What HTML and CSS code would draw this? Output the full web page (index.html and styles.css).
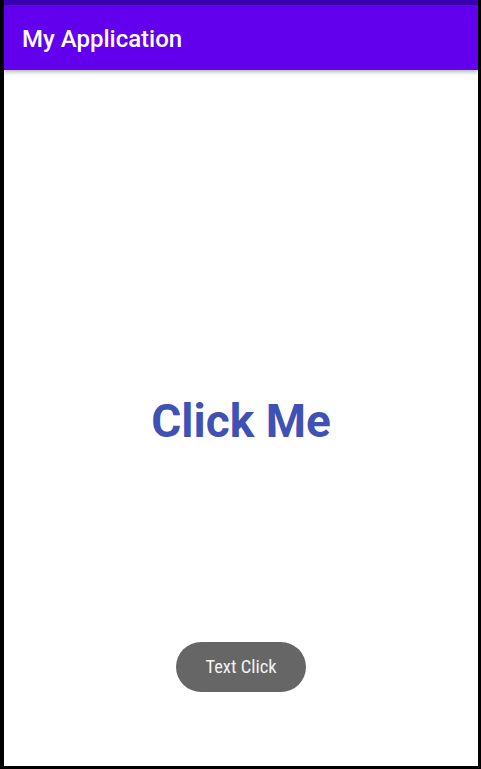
FILE: index.html
```html
<!DOCTYPE html>
<html>
<head>
    <meta charset="UTF-8">
    <title>My Application</title>
    <link rel="stylesheet" href="styles.css">
</head>
<body>
    <div class="device">
        <div class="status-bar"></div>
        <div class="app-bar">
            <span class="app-title">My Application</span>
        </div>
        <div class="content">
            <span class="click-text">Click Me</span>
            <div class="toast">Text Click</div>
        </div>
    </div>
</body>
</html>
```

FILE: styles.css
```css
* {
    box-sizing: border-box;
}

html, body {
    margin: 0;
    height: 100%;
    background-color: #000;
}

body {
    font-family: Roboto, "Liberation Sans", sans-serif;
}

.device {
    height: 769px;
    display: flex;
    flex-direction: column;
    border-left: 4px solid #000;
    border-right: 3px solid #000;
    border-bottom: 3px solid #000;
    background-color: #fff;
}

.status-bar {
    height: 5px;
    background-color: #3700B3;
}

.app-bar {
    height: 65px;
    display: flex;
    align-items: center;
    padding-left: 18px;
    padding-top: 3px;
    background-color: #6200EE;
    box-shadow: 0 2px 4px rgba(0, 0, 0, 0.3);
    position: relative;
    z-index: 1;
}

.app-title {
    color: #fff;
    font-size: 24px;
    font-weight: 500;
}

.content {
    flex: 1;
    position: relative;
    display: flex;
    align-items: center;
    justify-content: center;
    padding-top: 6px;
}

.click-text {
    color: #3F51B5;
    font-size: 46px;
    font-weight: bold;
}

.toast {
    position: absolute;
    left: 172px;
    bottom: 74px;
    width: 130px;
    height: 50px;
    border-radius: 25px;
    background-color: #666;
    color: #f4f4f4;
    font-size: 18.5px;
    font-stretch: condensed;
    display: flex;
    align-items: center;
    justify-content: center;
}
```
